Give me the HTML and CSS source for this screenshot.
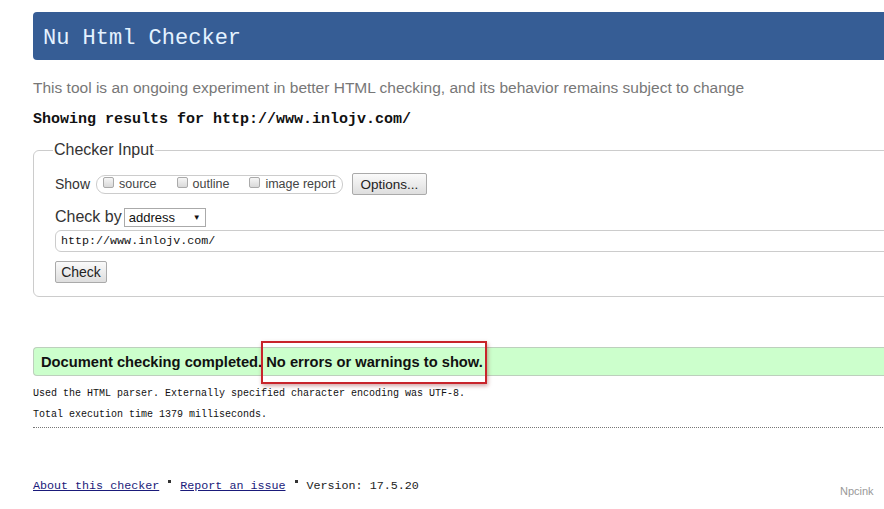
FILE: index.html
```html
<!DOCTYPE html>
<html lang="en">
<head>
    <meta charset="UTF-8">
    <title>Nu Html Checker</title>
    <link rel="stylesheet" href="styles.css">
</head>
<body>
    <div class="page">
        <h1 class="title">Nu Html Checker</h1>
        <p class="intro">This tool is an ongoing experiment in better HTML checking, and its behavior remains subject to change</p>
        <p class="showing">Showing results for http://www.inlojv.com/</p>

        <fieldset class="checker">
            <legend>Checker Input</legend>
            <div class="row show-row">
                <span class="lbl">Show</span>
                <span class="pill">
                    <label><input type="checkbox"> source</label>
                    <label><input type="checkbox"> outline</label>
                    <label><input type="checkbox"> image report</label>
                </span>
                <button class="btn">Options...</button>
            </div>
            <div class="row by-row">
                <span class="lbl big">Check by</span>
                <span class="select">address <span class="arrow">&#9660;</span></span>
            </div>
            <div class="url">http://www.inlojv.com/</div>
            <button class="btn check">Check</button>
        </fieldset>

        <div class="result">
            Document checking completed. No errors or warnings to show.
            <span class="mark"></span>
        </div>
        <p class="note first">Used the HTML parser. Externally specified character encoding was UTF-8.</p>
        <p class="note">Total execution time 1379 milliseconds.</p>
        <hr class="dots">

        <p class="footer">
            <a href="#">About this checker</a> <span class="bullet"></span> <a href="#">Report an issue</a> <span class="bullet"></span> Version: 17.5.20
        </p>
    </div>
    <div class="stamp">Npcink</div>
</body>
</html>
```

FILE: styles.css
```css
html, body {
    margin: 0;
    background: #fff;
    overflow: hidden;
}
body {
    width: 884px;
    height: 509px;
    position: relative;
    font-family: "Liberation Sans", Arial, sans-serif;
    color: #222;
}
.page {
    width: 1100px;
    padding: 12px 0 0 33px;
}
.title {
    margin: 0;
    height: 48px;
    line-height: 53px;
    padding-left: 10px;
    background: #365d95;
    border-radius: 4px;
    color: #e4f2ff;
    font-family: "Liberation Mono", monospace;
    font-weight: normal;
    font-size: 22px;
}
.intro {
    margin: 18px 0 0;
    font-size: 15.5px;
    line-height: 19px;
    color: #777;
}
.showing {
    margin: 14px 0 0;
    font-family: "Liberation Mono", monospace;
    font-weight: bold;
    font-size: 15px;
    line-height: 18px;
    color: #111;
}
.checker {
    margin: 12px 0 0;
    padding: 12px 21px 13px;
    border: 1px solid #ccc;
    border-radius: 6px;
}
.checker legend {
    padding: 0 1px;
    margin-left: -2px;
    font-size: 16px;
    color: #333;
}
.row {
    display: flex;
    align-items: center;
}
.show-row {
    height: 22px;
    margin-top: 2px;
}
.lbl {
    font-size: 14px;
    color: #333;
    margin-right: 6px;
}
.lbl.big {
    font-size: 16px;
    margin-right: 2px;
}
.pill {
    display: flex;
    align-items: center;
    height: 17px;
    padding: 0 6px;
    border: 1px solid #ccc;
    border-radius: 9px;
    font-size: 12.5px;
    color: #444;
    gap: 20px;
}
.pill label {
    display: flex;
    align-items: center;
}
.pill input {
    appearance: none;
    width: 11px;
    height: 11px;
    margin: -4px 5px 0 0;
    border: 1px solid #aaa;
    border-radius: 2px;
    background: linear-gradient(#f6f6f6, #d9d9d9);
}
.btn {
    font-family: "Liberation Sans", Arial, sans-serif;
    font-size: 13.5px;
    color: #222;
    padding: 0 8px;
    height: 22px;
    border: 1px solid #aaa;
    border-radius: 2px;
    background: linear-gradient(#fafafa, #dedede);
}
.show-row .btn {
    margin-left: 9px;
    width: 75px;
}
.by-row {
    margin-top: 12px;
    height: 20px;
}
.select {
    display: flex;
    align-items: center;
    justify-content: space-between;
    width: 72px;
    height: 17px;
    padding: 0 4px;
    border: 1px solid #aaa;
    font-size: 13px;
    color: #111;
}
.arrow {
    font-size: 8px;
}
.url {
    margin-top: 3px;
    height: 20px;
    line-height: 20px;
    padding-left: 5px;
    border: 1px solid #ccc;
    border-radius: 6px;
    font-family: "Liberation Mono", monospace;
    font-size: 11.7px;
    color: #111;
}
.btn.check {
    display: block;
    margin-top: 9px;
    width: 52px;
    height: 22px;
    padding: 0;
    font-size: 14px;
}
.result {
    position: relative;
    margin-top: 50px;
    height: 27px;
    line-height: 28px;
    padding-left: 7px;
    background: #ccffcc;
    border: 1px solid #bdd0bd;
    border-right: none;
    border-radius: 4px 0 0 4px;
    font-size: 14.7px;
    font-weight: bold;
    color: #111;
}
.mark {
    position: absolute;
    left: 227px;
    top: -7px;
    width: 222px;
    height: 39px;
    border: 2px solid #c8242b;
    box-shadow: 1px 2px 4px rgba(120, 0, 0, 0.35);
}
.note {
    margin: 0;
    font-family: "Liberation Mono", monospace;
    font-size: 10px;
    line-height: 21px;
    color: #111;
}
.note.first {
    margin-top: 7px;
}
.dots {
    margin: 2px 0 0;
    border: none;
    border-top: 1px dotted #777;
}
.footer {
    margin: 51px 0 0;
    font-family: "Liberation Mono", monospace;
    font-size: 11.7px;
    color: #222;
}
.footer a {
    color: #1a1a7a;
}
.bullet {
    display: inline-block;
    width: 3px;
    height: 3px;
    margin: 0 2px 6px;
    background: #333;
}
.stamp {
    position: absolute;
    left: 840px;
    top: 485px;
    font-size: 11px;
    color: #999;
}
```
